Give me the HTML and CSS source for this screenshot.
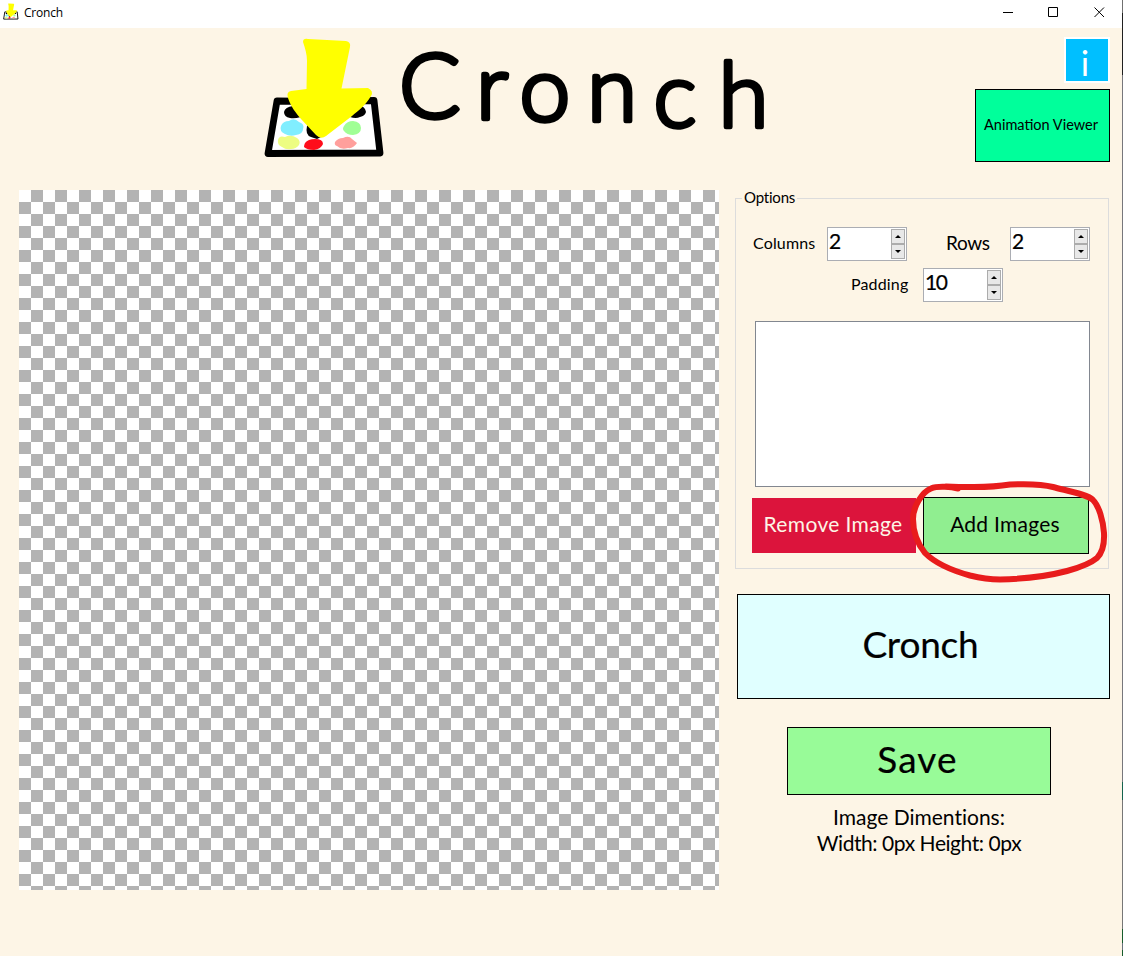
FILE: index.html
```html
<!DOCTYPE html>
<html lang="en">
<head>
<meta charset="utf-8">
<title>Cronch</title>
<link rel="stylesheet" href="styles.css">
</head>
<body>
<svg class="defs" width="0" height="0" aria-hidden="true">
  <symbol id="logo" viewBox="0 0 140 135">
    <path d="M22 71L118 71L125 123L13 123Z" fill="#fff"/>
    <path d="M22 71Q70 72 119 70.500L125 123L13 123.500Z" fill="none" stroke="#000" stroke-width="6.800" stroke-linejoin="round"/>
    <path d="M29 82Q30 77 38 76L46 87Q39 89 35 88Q29 87 29 82ZM111 82Q110 77 106 76L95 87Q101 89 105 87Q110 86 111 82ZM52 96Q50 105 56 107L62 109L66 107L54 94Z" fill="#000"/>
    <path d="M26 96Q28 91 34 91Q39 87 44 92Q50 94 48 99Q48 104 41 105Q35 107 30 104Q24 101 26 96Z" fill="#80eeff"/>
    <path d="M89 96Q92 91 98 91Q106 92 106 98Q106 104 98 105Q92 105 89 101Q87 99 89 96Z" fill="#a0ff95"/>
    <path d="M23 110Q24 105 30 107Q36 104 42 108Q46 111 44 115Q41 119 36 119Q31 120 27 117Q22 115 23 110Z" fill="#edfd82"/>
    <path d="M50 113Q53 109 60 109Q68 109 68 114Q66 119 59 120Q52 120 49 117Q49 115 50 113Z" fill="#ff0d1b"/>
    <path d="M80 112Q83 108 88 108Q94 105 97 109L102 113Q98 119 93 118Q86 120 82 116Q79 115 80 112Z" fill="#ff9f9c"/>
    <path d="M48 12Q48 8 53 9L91 11Q96 12 95 17L86.500 58.500L113 58Q119 61 116 66C110 76 104 80 97 86L71 106Q66 110 61 105L46 89C41 83 36 77 33 68Q31 62 36 61L51.500 59L52 31C52 24 50 18 48 12Z" fill="#ff0"/>
  </symbol>
</svg>

<header class="titlebar">
  <svg class="app-icon" viewBox="8 6 125 124" preserveAspectRatio="none"><use href="#logo" width="140" height="135"/></svg>
  <span class="app-name">Cronch</span>
  <svg class="window-controls" viewBox="0 0 104 12">
    <path d="M0 6.500H10M45.500 1.500H54.500V10.500H45.500ZM91.500 1.500L101 11M101 1.500L91.500 11" fill="none" stroke="#000"/>
  </svg>
</header>

<main>
  <section class="masthead">
    <svg class="logo" viewBox="0 0 140 135"><use href="#logo" width="140" height="135"/></svg>
    <svg class="wordmark" viewBox="0 0 390 135">
      <text x="9" y="87.500">C</text><text x="86" y="88.500">r</text><text x="129.500" y="91">o</text><text x="197" y="90.500">n</text><text x="263.500" y="97">c</text><text x="328.500" y="96.500">h</text>
    </svg>
    <div class="actions">
      <button class="info">i</button>
      <button class="viewer"><span>Animation Viewer</span></button>
    </div>
  </section>

  <div class="workspace">
    <div class="preview"></div>
    <aside class="side">
      <fieldset class="options">
        <legend>Options</legend>
        <div class="fields">
          <label class="columns">Columns</label>
          <div class="spinner"><span>2</span><div class="arrows"><i class="up"></i><i class="down"></i></div></div>
          <label class="rows">Rows</label>
          <div class="spinner"><span>2</span><div class="arrows"><i class="up"></i><i class="down"></i></div></div>
        </div>
        <div class="fields second">
          <label class="padding">Padding</label>
          <div class="spinner"><span>10</span><div class="arrows"><i class="up"></i><i class="down"></i></div></div>
        </div>
        <div class="image-list"></div>
        <div class="image-actions">
          <button class="remove">Remove Image</button>
          <button class="add">Add Images</button>
        </div>
        <svg class="annotation" viewBox="0 0 223 115">
          <path d="M58 13.500C52 12 38 10.500 31 13.500C22 17 13 32 13 44C13 56 17 68 25 78C34 87 50 95 70 100.500C82 103.500 88 104.500 100 104.500C126 104 148 101 167 96C180 92.500 191 88 197 83C202 78 204.500 68 204 58C203 45 199 31 193 25C188 19.500 168 16 153 12C142 9 122 9 110 9.500C98 11.500 87 12 74 12C64 12 58 12 46 11.500"/>
        </svg>
      </fieldset>
      <button class="cronch"><span>Cronch</span></button>
      <button class="save"><span>Save</span></button>
      <p class="dimensions"><span class="d1">Image Dimentions:</span><br><span class="d2">Width: 0px Height: 0px</span></p>
    </aside>
  </div>
</main>
<div class="window-edge"></div>
</body>
</html>
```
FILE: styles.css
```css
* { box-sizing: border-box; }
body {
  margin: 0;
  width: 1123px;
  height: 956px;
  overflow: hidden;
  position: relative;
  background: #fdf5e6;
  color: #000;
  font-family: Lato, "Open Sans", sans-serif;
  font-variant-ligatures: none;
}
button {
  margin: 0;
  padding: 0;
  border: 1px solid #000;
  font-family: inherit;
  color: #000;
  white-space: nowrap;
}
.defs { position: absolute; }
.titlebar {
  display: flex;
  align-items: center;
  height: 28px;
  padding: 0 18px 3px 3px;
  background: #fff;
}
.app-icon { width: 16px; height: 17px; margin-top: -2px; }
.app-name { margin: 0 0 0 5px; font: 12px "Open Sans", sans-serif; letter-spacing: -0.2px; }
.window-controls { width: 104px; height: 12px; margin: -2px -2px 0 auto; }

.masthead { display: flex; height: 162px; padding: 0 13px 0 255px; }
.logo { width: 140px; height: 135px; margin: 2px -5px 0 0; flex: none; }
.wordmark { width: 390px; height: 135px; margin-top: 2px; flex: none; overflow: visible; }
.wordmark text {
  font-size: 91px;
  font-weight: 300;
  stroke: #000;
  stroke-width: 4.6px;
  stroke-linejoin: round;
}
.actions { margin-left: auto; display: flex; flex-direction: column; align-items: flex-end; padding-top: 9px; gap: 6px; }
.info { width: 46px; height: 46px; border: 2px solid #fff; background: #00bfff; color: #fff; font-size: 35px; line-height: 40px; padding: 3px 4px 0 0; }
.viewer { width: 135px; height: 73px; background: #00ff9b; font-size: 14.5px; padding: 0 3px 3px 0; }

.workspace { display: flex; padding-left: 19px; gap: 16px; }
.preview {
  width: 700px;
  height: 700px;
  background: repeating-conic-gradient(#b3b3b3 0 25%, #fff 0 50%) 0 0 / 24px 24px;
}
.side { width: 375px; }
.options { position: relative; width: 374px; height: 379px; margin: 0; padding: 0; border: 1px solid #dcdcdc; }
.options legend { height: 16px; margin-left: 6px; padding: 0 2px; font-size: 15px; line-height: 15px; letter-spacing: -0.2px; }
.fields { display: flex; align-items: center; height: 34px; margin-top: 21px; padding-left: 17px; }
.fields label { font-size: 16px; line-height: 30px; padding-bottom: 2px; white-space: nowrap; letter-spacing: 0.15px; }
.second { margin-top: 7px; padding-left: 115px; }
.columns { width: 74px; }
.fields .rows { width: 64px; margin-left: 39px; font-size: 19px; letter-spacing: -0.3px; }
.padding { width: 72px; }
.spinner { display: flex; justify-content: space-between; width: 80px; height: 34px; padding: 1px; border: 1px solid #abadb3; background: #fff; font-size: 21px; line-height: 24px; letter-spacing: -1.5px; -webkit-text-stroke: 0.2px #000; }
.arrows { display: flex; flex-direction: column; width: 14px; background: #f0f0f0; }
.arrows i { width: 14px; height: 15px; display: flex; align-items: center; justify-content: center; border: 1px solid #acacac; background: #e8e8e8; }
.arrows i::before { content: ""; border: 3px solid transparent; border-top-width: 0; border-bottom: 3px solid #000; }
.arrows .down::before { border-top: 3px solid #000; border-bottom-width: 0; }
.image-list { width: 335px; height: 166px; margin: 19px 0 0 19px; border: 1px solid #828790; background: #fff; }
.image-actions { display: flex; align-items: center; gap: 7px; margin: 10px 0 0 16px; }
.image-actions button { font-size: 21px; padding: 0 2px 4px 0; letter-spacing: 0.25px; }
.image-actions .remove { width: 164px; height: 55px; border: 0; background: #dc143c; color: #fdf5e6; letter-spacing: 0.35px; }
.add { width: 166px; height: 57px; background: #90ee90; }
.annotation { position: absolute; left: 164px; top: 269px; width: 223px; height: 115px; overflow: visible; }
.annotation path { fill: none; stroke: #e81c1c; stroke-width: 6; stroke-linecap: round; stroke-linejoin: round; }
.cronch { display: block; width: 373px; height: 105px; margin: 25px 0 0 2px; padding: 0 6px 6px 0; background: #e0ffff; font-size: 37px; letter-spacing: -0.2px; -webkit-text-stroke: 0.2px #000; }
.save { display: block; width: 264px; height: 68px; margin: 28px 0 0 52px; padding: 0 3px 6px 0; background: #98fb98; font-size: 37px; letter-spacing: 1.2px; -webkit-text-stroke: 0.2px #000; }
.dimensions { width: 264px; margin: 9px 0 0 52px; text-align: center; font-size: 21px; line-height: 26px; white-space: nowrap; }
.d2 { letter-spacing: -0.45px; }
.window-edge {
  position: absolute;
  right: 0;
  top: 0;
  width: 1px;
  height: 956px;
  background: linear-gradient(#707070 0 13px, #202020 13px 75px, #77777c 75px 782px, #15634e 782px 800px, #777 800px 929px, #175c2d 929px 943px, #68717b 943px 950px, #175c2d 950px);
}
```
